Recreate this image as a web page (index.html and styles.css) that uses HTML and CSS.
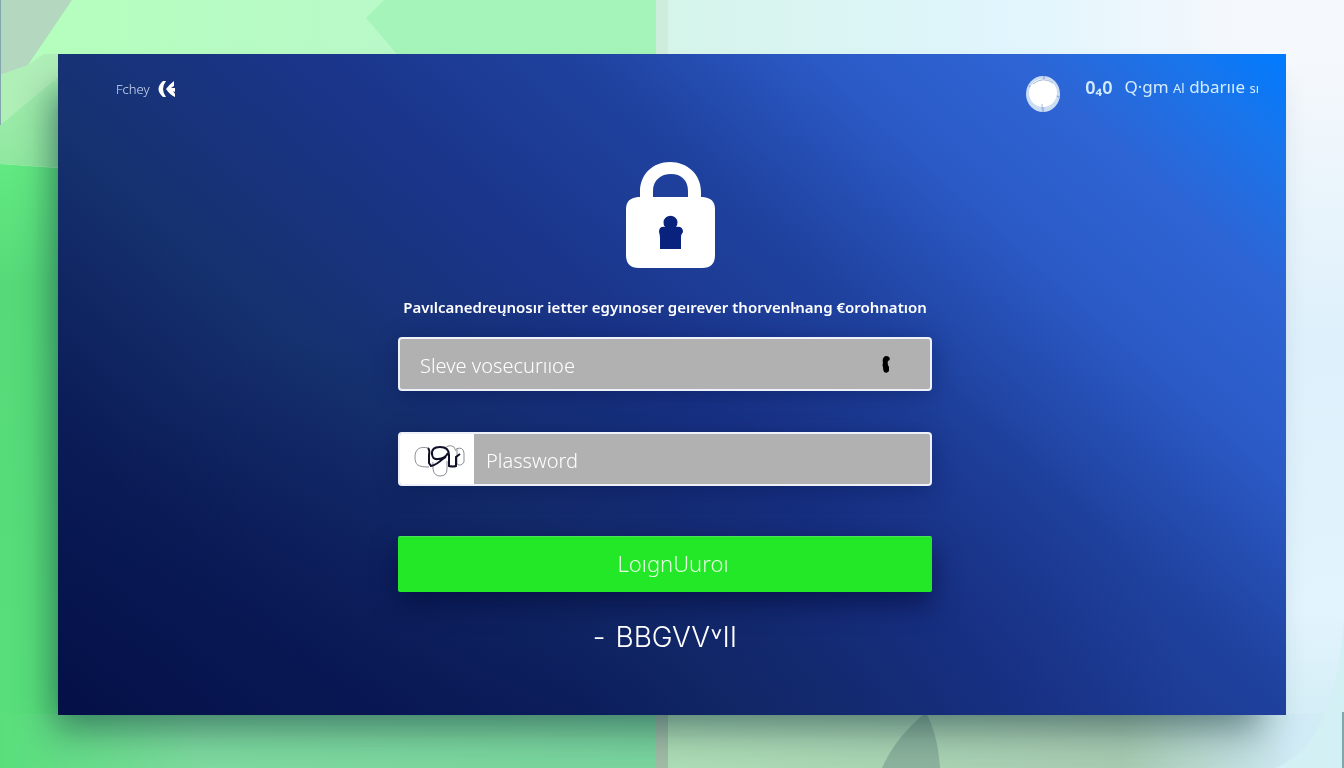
FILE: index.html
```html
<!DOCTYPE html>
<html lang="en">
<head>
<meta charset="utf-8">
<meta name="viewport" content="width=device-width, initial-scale=1">
<title>Login</title>
<link rel="stylesheet" href="styles.css">
</head>
<body class="page">
<svg class="backdrop" viewBox="0 0 1344 768" preserveAspectRatio="none" aria-hidden="true">
  <defs>
    <linearGradient id="leftTop" x1="0" y1="0" x2="1" y2="0"><stop offset="0" stop-color="#b4ffbc"/><stop offset="1" stop-color="#bdf5d2"/></linearGradient>
    <linearGradient id="leftSide" x1="0" y1="0" x2="0" y2="1"><stop offset="0" stop-color="#62e982"/><stop offset=".2" stop-color="#56da79"/><stop offset="1" stop-color="#58df7b"/></linearGradient>
    <linearGradient id="leftBase" x1="0" y1="0" x2="1" y2="0"><stop offset="0" stop-color="#58df7b"/><stop offset=".3" stop-color="#7edb9f"/><stop offset="1" stop-color="#7ad59e"/></linearGradient>
    <linearGradient id="fold" x1="0" y1="0" x2="0" y2="1"><stop offset="0" stop-color="#a4eeb0"/><stop offset="1" stop-color="#8fe79f"/></linearGradient>
    <linearGradient id="right" x1="0" y1="0" x2="1" y2="0"><stop offset="0" stop-color="#d5f5ea"/><stop offset=".5" stop-color="#e0f5fd"/><stop offset=".85" stop-color="#f5f8fc"/><stop offset="1" stop-color="#f7f8fc"/></linearGradient>
    <linearGradient id="rightSide" x1="0" y1="0" x2="0" y2="1"><stop offset="0" stop-color="#f5f8fc"/><stop offset=".08" stop-color="#f5f8fc"/><stop offset=".45" stop-color="#ddf0fb"/><stop offset=".8" stop-color="#e2f4fe"/><stop offset="1" stop-color="#cdeaf2"/></linearGradient>
    <linearGradient id="rightBase" x1="0" y1="0" x2="1" y2="0"><stop offset="0" stop-color="#aedfb6"/><stop offset=".68" stop-color="#a8ccb2"/><stop offset=".84" stop-color="#c0dedc"/><stop offset=".93" stop-color="#d0ebf6"/><stop offset="1" stop-color="#d0ebf6" stop-opacity="0"/></linearGradient>
  </defs>
  <rect width="658" height="170" fill="url(#leftTop)"/>
  <path d="M0 125L66 70V168L0 164z" fill="url(#fold)"/>
  <path d="M0 75L28 65L44 54H66V70L0 125z" fill="#b1efb8"/>
  <path d="M0 0H72L28 65L0 75z" fill="#b4d8bf"/>
  <path d="M384 0H658V60H402L366 18z" fill="#a5f5bb"/>
  <path d="M0 164L58 168H300V768H0z" fill="url(#leftSide)"/>
  <rect y="714" width="658" height="54" fill="url(#leftBase)"/>
  <rect x="656" width="688" height="384" fill="url(#right)"/>
  <rect x="1240" width="104" height="768" fill="url(#rightSide)"/>
  <rect x="656" y="714" width="688" height="54" fill="url(#rightBase)"/>
  <path d="M656 0h12v60h-12z" fill="#cfeddc"/>
  <path d="M656 700h12v68h-12z" fill="#a1bda7"/>
  <path d="M882 768Q895 738 926 712Q938 735 940 768z" fill="#86ab98" opacity=".8"/>
  <path d="M1344 620V768H1275Q1335 745 1344 620z" fill="#d3f0f4"/>
  <path d="M0 0h1v125H0zM1342 712h2v56h-2z" fill="#82a7ab"/>
</svg>
<main class="card">
  <header class="topbar">
    <a class="back" href="#">Fchey
      <svg class="back-icon" viewBox="0 0 18 18" aria-hidden="true"><path d="M5 1H8Q2 9 8 17H5Q-4 9 5 1z"/><path d="M16 1V6L13 8H17V12L15 11L17 14V17Q12 15 8 9Q12 4 16 1z"/></svg>
    </a>
    <div class="account">
      <svg class="avatar" viewBox="0 0 36 38" aria-hidden="true"><ellipse cx="18" cy="19" rx="17" ry="18" fill="#cbdcf5"/><path d="M19 1V5M34 22L30 20M18 32V37M4 11L7 13" stroke="#7898cf" fill="none"/><ellipse cx="18" cy="18" rx="14" ry="14" fill="#fff"/><path d="M8 9Q18 1 28 8M17 29V35" stroke="#a5b9d5" fill="none"/></svg>
      <strong class="count">0₄0</strong>
      <a class="account-link" href="#">Q·gm <small class="small-caps">Al</small> dbarııe <small class="small-caps">sı</small></a>
    </div>
  </header>
  <form class="login">
    <svg class="lock" viewBox="0 0 89 106" aria-hidden="true"><path fill="#fff" fill-rule="evenodd" d="M14 35V30C14 12 27 0 44 0S75 12 75 30V35H77Q89 36 89 47V93Q89 106 76 106H13Q0 106 0 93V47Q0 36 12 35zM27 35H62V29C62 18 55 12 45 12S27 18 27 29z"/><path fill="#08227d" d="M39 65A7 7 0 1 1 50 65Q57 64 57 70Q55 72 55 76V87H34V76Q34 73 33 70Q33 64 39 65z"/></svg>
    <p class="intro">Pavılcanedreųnosır ietter egyınoser geırever thorvenŀnang €orohnatıon</p>
    <div class="field">
      <input class="input" type="text" aria-label="Sleve vosecurııoe" placeholder="Sleve vosecurııoe">
      <svg class="field-icon" viewBox="0 0 8 17" aria-hidden="true"><path d="M2 1Q4-1 7 1Q9 4 6 5Q5 8 7 11V15Q5 18 2 16Q1 14 1 11Q0 9 1 7Q0 3 2 1z"/></svg>
    </div>
    <div class="field field-password">
      <span class="badge"><svg class="badge-icon" viewBox="0 0 52 34" fill="none" aria-hidden="true"><path d="M14 3C6 1 1 4 1 12S4 22 15 22M19 17V24Q20 31 26 31Q33 31 33 24V16M31 3Q35-1 40 2L42 6M42 4Q49 1 50 8V17Q47 22 43 19V4" stroke="#8d8d99"/><path d="M14 3Q16 5 15 10V18L17 21M16 21C22 21 25 16 32 12M18 10Q17 2 26 2Q35 2 35 10V21Q39 22 42 21V12L46 9M18 8Q18 15 24 14Q31 14 34 8" stroke="#101027" stroke-width="2"/></svg></span>
      <input class="input" type="password" aria-label="Plassword" placeholder="Plassword">
    </div>
    <button class="submit" type="button">LoıgnUuroı</button>
    <a class="more" href="#"><span class="more-dash">-</span>BBGVV˅II</a>
  </form>
</main>
</body>
</html>
```
FILE: styles.css
```css
* { box-sizing: border-box; }

.page {
  display: flex;
  min-height: 100vh;
  margin: 0;
  padding: 54px 58px 53px;
  font-family: "Noto Sans", "Open Sans", sans-serif;
  color: #fff;
}

.backdrop {
  position: fixed;
  inset: 0;
  z-index: -1;
  width: 100%;
  height: 100%;
}

.card {
  flex: 1;
  min-width: 0;
  background:
    radial-gradient(ellipse 50% 65% at 42% 100%, rgba(4, 12, 76, .42), rgba(4, 12, 76, 0)),
    linear-gradient(42deg, #041046 0%, #0a1b56 16%, #163270 34%, #1a358a 50%, #1f429f 64%, #2b5ac6 76%, #2e64d4 86%, #1a74ea 94%, #007bff 100%);
  box-shadow: -14px 26px 34px -8px rgba(20, 50, 60, .42), -20px 18px 32px -26px rgba(20, 70, 80, .4);
}

.topbar {
  display: flex;
  align-items: flex-start;
  justify-content: space-between;
  padding: 21px 27px 0 58px;
}

.back {
  display: flex;
  align-items: center;
  gap: 8px;
  color: #d5def5;
  font-size: 13px;
  font-weight: 300;
  line-height: 28px;
  text-decoration: none;
}

.back-icon { width: 18px; height: 18px; fill: #fff; }

.account { display: flex; align-items: flex-start; color: #d4ecff; line-height: 24px; }
.avatar { width: 36px; height: 38px; margin-right: 24px; }
.count { margin-right: 12px; font-size: 18px; font-weight: 600; }
.account-link { color: inherit; font-size: 17px; text-decoration: none; }
.small-caps { font-size: 13px; }

.login {
  display: flex;
  flex-direction: column;
  align-items: center;
  width: 100%;
  max-width: 548px;
  margin: 0 auto;
  padding: 49px 14px 40px 0;
}

.lock { width: 89px; height: 106px; margin-left: 11px; }

.intro {
  margin: 27px 0 18px;
  font-size: 15px;
  font-weight: 600;
  line-height: 24px;
  text-align: center;
}

.field {
  display: flex;
  align-items: center;
  width: 100%;
  height: 54px;
  overflow: hidden;
  background: #b1b1b1;
  border: 2px solid #eef0fa;
  border-radius: 4px;
  box-shadow: 0 4px 22px rgba(4, 16, 70, .35);
}

.field-password { margin: 41px 0 50px; }

.input {
  flex: 1;
  min-width: 0;
  height: 100%;
  padding: 2px 20px 0;
  background: none;
  border: 0;
  color: #fff;
  font: 400 20px "Noto Sans", "Open Sans", sans-serif;
}

.input::placeholder { color: #fff; opacity: 1; }
.field-password .input { padding-left: 12px; }
.field-icon { width: 8px; height: 17px; margin-right: 40px; }

.badge {
  display: flex;
  align-items: center;
  justify-content: center;
  width: 74px;
  height: 100%;
  padding: 6px 0 0 6px;
  background: #fff;
}

.badge-icon { width: 52px; height: 34px; }

.submit {
  width: 100%;
  height: 56px;
  padding: 0 0 4px 16px;
  background: #23e827;
  border: 0;
  border-top: 1px solid #4be45a;
  border-radius: 2px;
  box-shadow: 0 12px 26px rgba(3, 10, 55, .6);
  color: #e3ffe0;
  font: 300 22px "Noto Sans", "Open Sans", sans-serif;
}

.input::placeholder { font-weight: 300; }

.more {
  margin-top: 28px;
  color: #fff;
  font-family: Inter, "Noto Sans", sans-serif;
  font-size: 28px;
  font-weight: 300;
  line-height: 34px;
  text-decoration: none;
}

.more-dash { margin-right: 10px; }
```
